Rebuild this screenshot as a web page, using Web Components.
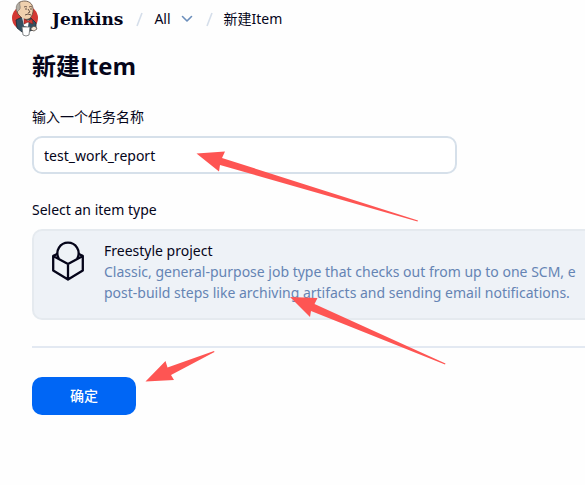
<!DOCTYPE html>
<html lang="zh-CN">
<head>
<meta charset="utf-8">
<title>新建Item</title>
<style>
	body {
		position: relative;
		margin: 0;
		overflow-x: hidden;
		background: #fefefe;
		color: #05051a;
		font: 14px/20px "Noto Sans", "Noto Sans CJK SC", sans-serif;
	}
	main {
		padding: 10px 0 0 32px;
	}
	h1 {
		margin: 0 0 23px;
		font-family: "Open Sans", "Noto Sans CJK SC", sans-serif;
		font-size: 24px;
		line-height: 36px;
	}
</style>
</head>
<body>
	<page-header>
		<crumb-item menu>All</crumb-item>
		<crumb-item>新建Item</crumb-item>
	</page-header>
	<main>
		<h1>新建Item</h1>
		<name-field value="test_work_report">输入一个任务名称</name-field>
		<item-type-list>
			<span slot="title">Select an item type</span>
			<item-type>
				<span slot="name">Freestyle project</span>
				Classic, general-purpose job type that checks out from up to one SCM, e<br>
				post-build steps like archiving artifacts and sending email notifications.
			</item-type>
		</item-type-list>
		<form-footer>确定</form-footer>
	</main>
	<arrow-notes></arrow-notes>

<script>
// Attach an open shadow root and fill it with the given markup
function render(el, html) {
	el.attachShadow({mode: 'open'}).innerHTML = html;
}

// Top bar: logo, product name and the breadcrumbs
class PageHeader extends HTMLElement {
	constructor() {
		super();
		render(this, `
			<style>
				:host { display: block; }
				header { display: flex; align-items: center; height: 38px; padding-left: 11px; }
				a { display: flex; align-items: center; gap: 13px; color: inherit; text-decoration: none; }
				strong { font: bold 17px/24px "DejaVu Serif", serif; }
				nav { display: flex; }
			</style>
			<header>
				<a href="#">
					<svg width="28" height="38" viewBox="0 0 28 38" aria-hidden="true">
						<ellipse cx="14" cy="18" rx="13" ry="12.500" fill="#d33833"/>
						<path d="M5 20 11 17l9 1 5 5v6l-6 2-8 1-5-4z" fill="#335061" stroke="#1d2a33" stroke-width=".8"/>
						<path d="M7 14C5 9 6 4 9 2c4-2 10-1 12 3 2 4 1 9-1 12-2 3-6 3-9 1z" fill="#efd0ae" stroke="#5b473b" stroke-width=".8"/>
						<path d="M6 12C4 7 6 3 9 2c-1 3 1 4 0 7z" fill="#b3aea5" stroke="#6b6259" stroke-width=".5"/>
						<path d="M13 7q2-1 3 0m2 0q2-1 3 0M14 9h2m3 0h2m-4 0 2 3-2 1m-3 2q3-2 6 0" fill="none" stroke="#59453b" stroke-width=".9"/>
						<path d="m11 17 4 4 3-1-1 7-4-1z" fill="#fff"/>
						<path d="m13 19 4 2 4-2 1 5-5-2-4 2z" fill="#d33833" stroke="#7a211e" stroke-width=".6"/>
						<path d="M11 27h8l-1 8q-3 2-6 0z" fill="#fff" stroke="#6a6d70" stroke-width=".8"/>
						<path d="M20 28q3-3 5-1l1 2-3 2-3-1z" fill="#f2e5d6" stroke="#493f39" stroke-width=".7"/>
					</svg>
					<strong>Jenkins</strong>
				</a>
				<nav><slot></slot></nav>
			</header>`);
	}
}

// One breadcrumb; the "menu" attribute adds a drop-down chevron
class CrumbItem extends HTMLElement {
	constructor() {
		super();
		const menu = this.hasAttribute('menu') ? `
			<button aria-label="Menu">
				<svg width="12" height="8" viewBox="0 0 12 8"><path d="m1.500 1.500 4.500 4.500 4.500-4.500" fill="none" stroke="#6b8ebb" stroke-width="1.600" stroke-linecap="round" stroke-linejoin="round"/></svg>
			</button>` : '';
		render(this, `
			<style>
				:host { display: flex; align-items: center; }
				.slash { margin: 0 10px 0 11px; }
				a { color: inherit; text-decoration: none; }
				button { display: flex; margin: 0 0 0 10px; padding: 0; border: 0; background: none; }
				svg { display: block; }
			</style>
			<svg class="slash" width="10" height="16" viewBox="0 0 10 16" aria-hidden="true"><path d="M8 2 3 15" stroke="#d5deea" stroke-width="1.600"/></svg>
			<a href="#"><slot></slot></a>${menu}`);
	}
}

class NameField extends HTMLElement {
	constructor() {
		super();
		render(this, `
			<style>
				:host { display: block; margin-bottom: 26px; }
				label { display: block; margin-bottom: 9px; }
				input {
					display: block; box-sizing: border-box;
					width: calc(100% - 128px); height: 38px; padding: 0 10px;
					border: 2px solid #d6e0ea; border-radius: 10px;
					background: #fff; color: inherit; font: inherit; outline: 0;
				}
			</style>
			<label for="name"><slot></slot></label>
			<input id="name" type="text">`);
		this.shadowRoot.querySelector('input').value = this.getAttribute('value');
	}
}

class ItemTypeList extends HTMLElement {
	constructor() {
		super();
		render(this, `
			<style>
				:host { display: block; }
				.title { margin-bottom: 9px; }
			</style>
			<div class="title"><slot name="title"></slot></div>
			<slot></slot>`);
	}
}

// Selectable card that runs on past the right edge of the window
class ItemType extends HTMLElement {
	constructor() {
		super();
		render(this, `
			<style>
				:host { display: block; }
				label {
					position: relative;
					display: flex; gap: 18px; box-sizing: border-box; min-height: 91px;
					padding: 9px 0 9px 18px; overflow: hidden;
					border: 2px solid #e5eaef; border-right: 0;
					border-radius: 10px 0 0 10px;
					background: #eef2f7; white-space: nowrap;
				}
				input { position: absolute; margin: 0; opacity: 0; }
				svg { flex: none; }
				.text { line-height: 21px; }
				.desc { color: #6584b4; }
			</style>
			<label>
				<input type="radio" checked>
				<svg width="34" height="42" viewBox="0 0 34 42" fill="none" stroke="#05051a" stroke-width="2.300" stroke-linejoin="round" stroke-linecap="round" aria-hidden="true">
					<path d="M6.500 18A10.600 10.600 0 1 1 25.500 18"/>
					<path d="M5 14 1.200 16v14.500L16 39.500l14.800-9V16L27 14M1.200 16 16 24l14.800-8M16 24v15.500"/>
				</svg>
				<div class="text">
					<div><slot name="name"></slot></div>
					<div class="desc"><slot></slot></div>
				</div>
			</label>`);
	}
}

class FormFooter extends HTMLElement {
	constructor() {
		super();
		render(this, `
			<style>
				:host { display: block; margin-top: 26px; padding-top: 29px; border-top: 2px solid #e3e9f2; }
				button {
					width: 104px; height: 38px; padding: 0;
					border: 0; border-radius: 10px;
					background: #0066f5; color: #fff; font: inherit; font-weight: 500;
				}
			</style>
			<button type="submit"><slot></slot></button>`);
	}
}

// Red arrows laid over the form
class ArrowNotes extends HTMLElement {
	constructor() {
		super();
		render(this, `
			<style>
				:host { position: absolute; top: 0; left: 0; pointer-events: none; }
				svg { display: block; }
			</style>
			<svg width="460" height="400" fill="#fe5553" aria-hidden="true">
				<path d="M196.500 153.500 225 151.500 222 158 418 220.500 417.500 221.500 220 165 219 171.500z"/>
				<path d="M290 297 317.500 298 314.500 304 445.500 363.500 445 364.500 311 311 310 317z"/>
				<path d="M145.500 381.500 165.500 361 167.500 367.500 214 351 214.500 352 171 375 174 380z"/>
			</svg>`);
	}
}

customElements.define('page-header', PageHeader);
customElements.define('crumb-item', CrumbItem);
customElements.define('name-field', NameField);
customElements.define('item-type-list', ItemTypeList);
customElements.define('item-type', ItemType);
customElements.define('form-footer', FormFooter);
customElements.define('arrow-notes', ArrowNotes);
</script>
</body>
</html>
